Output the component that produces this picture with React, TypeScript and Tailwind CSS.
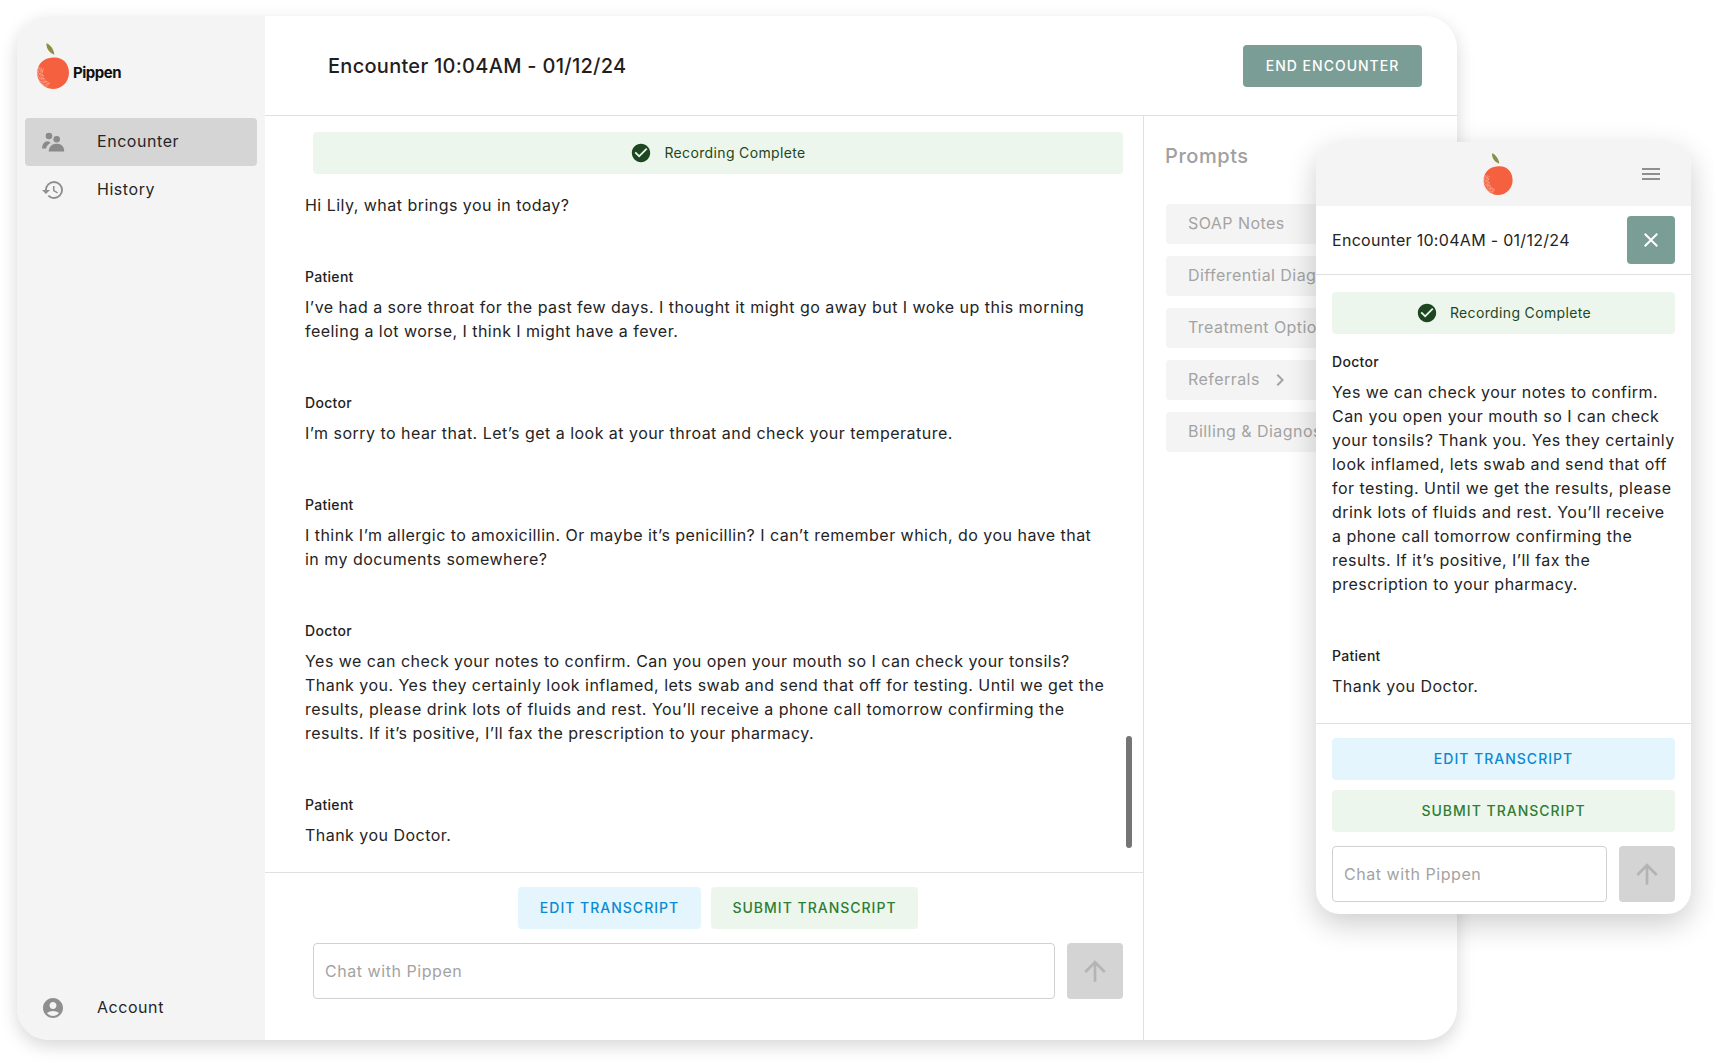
import React from "react";
import { MdAccountCircle, MdArrowUpward, MdCheckCircle, MdChevronRight, MdClose, MdHistory, MdMenu } from "react-icons/md";

const specks = Array.from({ length: 170 }, (_, i) => {
  const a = 1.9 + ((i * 0.37) % 1) * 1.7;
  const r = 10 + ((i * 0.618) % 1) * 6;
  return { x: 16 + Math.cos(a) * r, y: 30 + Math.sin(a) * r, s: 0.15 + ((i * 0.23) % 1) * 0.3 };
});

function Apple({ className }: { className: string }) {
  return (
    <svg viewBox="0 0 32 46" className={className}>
      <path d="M9.5 0.3C13 1.5 17 6 17.3 11.8C13 10.2 9 6 9.5 0.3Z" fill="#8a8f45" />
      <path d="M16 14.5C25.5 13.6 32 20.5 32 29.5C32 39 25 46 15.8 46C6.8 46 0 38.5 0.2 29.8C0.4 21 6.5 15 16 14.5Z" fill="#f5603f" />
      {specks.map((d, i) => (
        <circle key={i} cx={d.x} cy={d.y} r={d.s} fill="#fff" fillOpacity={0.7} />
      ))}
    </svg>
  );
}

function PeopleIcon() {
  return (
    <svg viewBox="0 0 24 24" className="w-[24px] h-[24px]" fill="#8a8a8a">
      <circle cx="8" cy="6" r="3.3" />
      <circle cx="15.7" cy="9.2" r="3.3" />
      <path d="M6.6 11.2C3.8 11.4 1.4 13.4 1 18.4H5C5.6 15.9 7.2 14.1 9.5 13C8.9 12 7.9 11.2 6.6 11.2Z" />
      <path d="M15.7 13.8C11.2 13.8 8 16.4 7.7 21.6H23.2C23.2 16.4 20.2 13.8 15.7 13.8Z" />
    </svg>
  );
}

function Banner() {
  return (
    <div className="h-[42px] rounded-[4px] bg-[#edf6ed] flex items-center justify-center gap-[12px] text-[14px] tracking-[0.35px] text-[#1e4620]">
      <MdCheckCircle className="w-[22px] h-[22px] text-[#1e4620]" />
      <span className="pb-[1px]">Recording Complete</span>
    </div>
  );
}

function ChatInput({ w }: { w: string }) {
  return (
    <div className="flex justify-between">
      <div className={`${w} h-[56px] rounded-[4px] border border-[#d0d0d0] bg-white flex items-center px-[11px] pb-[1px] text-[16px] tracking-[0.55px] text-[#a3a3a3]`}>
        Chat with Pippen
      </div>
      <div className="w-[56px] h-[56px] rounded-[4px] bg-[#d4d4d4] flex items-center justify-center">
        <MdArrowUpward className="w-[32px] h-[32px] text-[#b4b4b4]" />
      </div>
    </div>
  );
}

function ActionButton({ label, tone, className = "" }: { label: string; tone: "blue" | "green"; className?: string }) {
  const colors = tone === "blue" ? "bg-[#e4f5fd] text-[#0a8ad2]" : "bg-[#edf6ed] text-[#2e7d32]";
  return (
    <div className={`${colors} ${className} h-[42px] rounded-[4px] flex items-center justify-center pb-[1px] text-[14px] font-medium tracking-[1px]`}>
      {label}
    </div>
  );
}

function Turn({ who, lines }: { who: string; lines: string[] }) {
  return (
    <div className="mt-[50px]">
      <div className="text-[14px] leading-[20px] font-medium tracking-[0.3px] text-[#222]">{who}</div>
      <div className="mt-[8px] text-[16px] leading-[24px] tracking-[0.47px] text-[#242424] whitespace-nowrap">
        {lines.map((l) => (
          <div key={l}>{l}</div>
        ))}
      </div>
    </div>
  );
}

function NavItem({ icon, label, active = false }: { icon: React.ReactNode; label: string; active?: boolean }) {
  return (
    <div className={`h-[48px] mx-[8px] rounded-[4px] flex items-center pl-[16px] ${active ? "bg-[#d5d5d5]" : ""}`}>
      <div className="w-[24px] flex justify-center">{icon}</div>
      <span className="ml-[32px] pb-[2px] text-[16px] tracking-[0.55px] text-[#262626]">{label}</span>
    </div>
  );
}

const promptItems = ["SOAP Notes", "Differential Diagnosis", "Treatment Options", "Referrals", "Billing & Diagnosis"];

export default function App() {
  return (
    <div className="w-[1714px] h-[1064px] bg-white pt-[16px] pl-[17px] relative overflow-hidden" style={{ fontFamily: "Inter, 'Open Sans', sans-serif" }}>
      <div className="w-[1440px] h-[1024px] rounded-[32px] bg-white shadow-[0_6px_18px_rgba(0,0,0,0.16)] flex overflow-hidden">
        <aside className="w-[248px] bg-[#f4f4f4] flex flex-col pb-[8px]">
          <div className="pt-[27px] pl-[20px] h-[102px] flex items-start">
            <Apple className="w-[32px] h-[46px]" />
            <span className="ml-[4px] mt-[19px] text-[15px] font-bold tracking-[-0.5px] text-[#111]">Pippen</span>
          </div>
          <NavItem active label="Encounter" icon={<PeopleIcon />} />
          <NavItem label="History" icon={<MdHistory className="w-[24px] h-[24px] text-[#8f8f8f] shrink-0" />} />
          <div className="flex-1" />
          <NavItem label="Account" icon={<MdAccountCircle className="w-[24px] h-[24px] text-[#8f8f8f]" />} />
        </aside>
        <main className="flex-1 flex flex-col min-w-0">
          <header className="h-[100px] shrink-0 border-b border-[#e0e0e0] flex items-center justify-between pl-[63px] pr-[35px]">
            <span className="text-[20px] font-medium tracking-[0.28px] text-[#1f1f1f]">Encounter 10:04AM - 01/12/24</span>
            <div className="w-[179px] h-[42px] rounded-[4px] bg-[#7a9d95] flex items-center justify-center text-[14px] font-medium tracking-[1px] text-white">END ENCOUNTER</div>
          </header>
          <div className="flex-1 flex min-h-0">
            <section className="w-[879px] shrink-0 border-r border-[#e0e0e0] flex flex-col">
              <div className="h-[756px] relative pt-[16px] overflow-hidden">
                <div className="ml-[48px] w-[810px]"><Banner /></div>
                <div className="pl-[40px]">
                  <div className="mt-[19px] text-[16px] leading-[24px] tracking-[0.47px] text-[#242424]">Hi Lily, what brings you in today?</div>
                  <Turn who="Patient" lines={["I’ve had a sore throat for the past few days. I thought it might go away but I woke up this morning", "feeling a lot worse, I think I might have a fever."]} />
                  <Turn who="Doctor" lines={["I’m sorry to hear that. Let’s get a look at your throat and check your temperature."]} />
                  <Turn who="Patient" lines={["I think I’m allergic to amoxicillin. Or maybe it’s penicillin? I can’t remember which, do you have that", "in my documents somewhere?"]} />
                  <Turn who="Doctor" lines={["Yes we can check your notes to confirm. Can you open your mouth so I can check your tonsils?", "Thank you. Yes they certainly look inflamed, lets swab and send that off for testing. Until we get the", "results, please drink lots of fluids and rest. You’ll receive a phone call tomorrow confirming the", "results. If it’s positive, I’ll fax the prescription to your pharmacy."]} />
                  <Turn who="Patient" lines={["Thank you Doctor."]} />
                </div>
                <div className="absolute left-[861px] top-[620px] w-[6px] h-[112px] rounded-full bg-[#757575]" />
              </div>
              <div className="flex-1 border-t border-[#e0e0e0] pt-[14px] pl-[48px] pr-[20px]">
                <div className="flex justify-center gap-[10px]">
                  <ActionButton label="EDIT TRANSCRIPT" tone="blue" className="w-[183px]" />
                  <ActionButton label="SUBMIT TRANSCRIPT" tone="green" className="w-[207px]" />
                </div>
                <div className="mt-[14px]"><ChatInput w="w-[742px]" /></div>
              </div>
            </section>
            <section className="flex-1 pl-[22px] pt-[25px] min-w-0">
              <div className="-ml-[1px] text-[20px] leading-[30px] font-medium tracking-[0.55px] text-[#a0a0a0]">Prompts</div>
              <div className="mt-[33px] flex flex-col gap-[12px]">
                {promptItems.map((p) => (
                  <div key={p} className="w-[272px] h-[40px] rounded-[4px] bg-[#f4f4f4] flex items-center pl-[22px] pb-[2px] text-[16px] tracking-[0.45px] text-[#a3a3a3] whitespace-nowrap">
                    {p}
                    {p === "Referrals" && <MdChevronRight className="ml-[8px] mt-[2px] w-[24px] h-[24px] text-[#a3a3a3]" />}
                  </div>
                ))}
              </div>
            </section>
          </div>
        </main>
      </div>

      <div className="absolute left-[1316px] top-[142px] w-[375px] h-[772px] rounded-[24px] bg-white shadow-[0_10px_30px_rgba(0,0,0,0.2)] overflow-hidden flex flex-col">
        <div className="h-[64px] shrink-0 bg-[#f4f4f4] relative flex items-center justify-center pr-[11px]">
          <Apple className="w-[30px] h-[42px]" />
          <MdMenu className="absolute right-[28px] top-[20px] w-[24px] h-[24px] text-[#8f8f8f]" />
        </div>
        <div className="h-[69px] shrink-0 border-b border-[#e0e0e0] flex items-center justify-between px-[16px]">
          <span className="pb-[1px] text-[16px] tracking-[0.3px] text-[#242424]">Encounter 10:04AM - 01/12/24</span>
          <div className="w-[48px] h-[48px] rounded-[4px] bg-[#7a9d95] flex items-center justify-center">
            <MdClose className="w-[24px] h-[24px] text-white" />
          </div>
        </div>
        <div className="px-[16px] flex-1 pt-[17px]">
          <Banner />
          <div className="mt-[18px] text-[14px] leading-[20px] font-medium tracking-[0.3px] text-[#222]">Doctor</div>
          <div className="mt-[8px] text-[16px] leading-[24px] tracking-[0.47px] text-[#242424] whitespace-nowrap">
            {["Yes we can check your notes to confirm.", "Can you open your mouth so I can check", "your tonsils? Thank you. Yes they certainly", "look inflamed, lets swab and send that off", "for testing. Until we get the results, please", "drink lots of fluids and rest. You’ll receive", "a phone call tomorrow confirming the", "results. If it’s positive, I’ll fax the", "prescription to your pharmacy."].map((l) => (
              <div key={l}>{l}</div>
            ))}
          </div>
          <div className="mt-[50px] text-[14px] leading-[20px] font-medium tracking-[0.3px] text-[#222]">Patient</div>
          <div className="mt-[8px] text-[16px] leading-[24px] tracking-[0.47px] text-[#242424]">Thank you Doctor.</div>
        </div>
        <div className="shrink-0 h-[191px] border-t border-[#e0e0e0] px-[16px] pt-[14px]">
          <ActionButton label="EDIT TRANSCRIPT" tone="blue" />
          <ActionButton label="SUBMIT TRANSCRIPT" tone="green" className="mt-[10px]" />
          <div className="mt-[14px]"><ChatInput w="w-[275px]" /></div>
        </div>
      </div>
    </div>
  );
}
